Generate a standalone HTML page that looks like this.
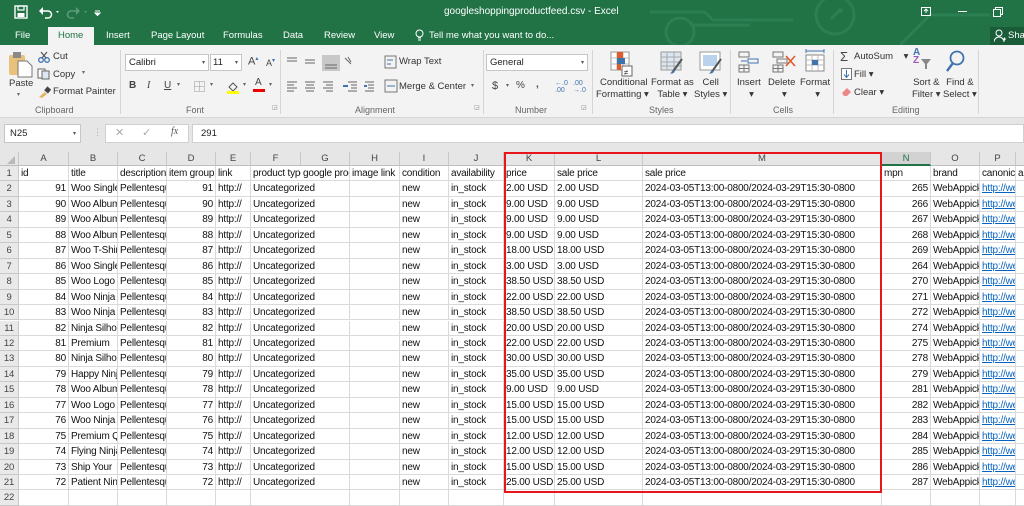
<!DOCTYPE html>
<html><head><meta charset="utf-8"><style>
*{margin:0;padding:0;box-sizing:border-box}
body{width:1024px;height:494px;overflow:hidden;position:relative;background:#fff;font-family:"Liberation Sans",Arial,sans-serif;color:#222}
.a{position:absolute;white-space:nowrap}
.tb{position:absolute;left:0;top:0;width:1024px;height:45px;background:#217346}
.rib{position:absolute;left:0;top:45px;width:1024px;height:73px;background:#f3f3f3;border-bottom:1px solid #d6d6d6}
.rt{font-size:9.5px;color:#333}
.gl{font-size:9px;color:#666;top:105px}
.sep{position:absolute;top:50px;width:1px;height:64px;background:#d5d5d5}
.r{position:absolute;left:0;width:1024px;height:15.45px}
.r i{font-style:normal;position:absolute;top:0;height:15.45px;line-height:15px;font-size:10px;letter-spacing:-0.2px;padding:0 2px;border-right:1px solid #dadada;border-bottom:1px solid #dadada;overflow:hidden;white-space:nowrap;color:#111}
.r i.rh{left:0;width:19px;background:#e9e9e9;border-color:#c8c8c8;text-align:center;color:#444;padding:0;font-size:9.5px}
.n{text-align:right}
.A{left:19px;width:50px}.B{left:69px;width:49px}.C{left:118px;width:49px}.D{left:167px;width:49px}.E{left:216px;width:35px}.F{left:251px;width:50px;overflow:visible!important;border-right:none!important;z-index:2}.G{left:301px;width:49px}.H{left:350px;width:50px}.I{left:400px;width:49px}.J{left:449px;width:55px}.K{left:504px;width:51px}.L{left:555px;width:88px}.M{left:643px;width:239px}.N{left:882px;width:49px}.O{left:931px;width:49px}.P{left:980px;width:36px}.Q{left:1016px;width:40px}
.lk{color:#0563c1!important;text-decoration:underline}
.ch{position:absolute;top:152px;height:14px;background:#e6e6e6;border-right:1px solid #c8c8c8;border-bottom:1px solid #bdbdbd;font-size:9.5px;text-align:center;line-height:14px;color:#444}
</style></head><body>
<div class="tb"></div>
<!-- title bar -->
<svg class="a" style="left:14px;top:5px" width="14" height="14" viewBox="0 0 14 14"><rect x="1" y="1" width="12" height="12" fill="none" stroke="#fff" stroke-width="1.4"/><rect x="4" y="1" width="6" height="4" fill="none" stroke="#fff" stroke-width="1.2"/><rect x="3.5" y="8" width="7" height="4" fill="#fff"/></svg>
<svg class="a" style="left:38px;top:5px" width="28" height="14" viewBox="0 0 28 14"><path d="M3 6h7a3.5 3.5 0 0 1 0 7H7" fill="none" stroke="#fff" stroke-width="1.5"/><path d="M1 6l4-4v8z" fill="#fff"/><path d="M18 6l3 0-1.5 2z" fill="#fff"/></svg>
<svg class="a" style="left:66px;top:5px" width="36" height="14" viewBox="0 0 36 14"><path d="M12 6H5a3.5 3.5 0 0 0 0 7h3" fill="none" stroke="#5c9b78" stroke-width="1.5"/><path d="M14 6l-4-4v8z" fill="#5c9b78"/><path d="M18 6h3l-1.5 2z" fill="#5c9b78"/><path d="M29 8h5l-2.5 2.5z M29 6h5" stroke="#fff" fill="#fff" stroke-width="1"/></svg>
<div class="a" style="left:444px;top:6px;font-size:10px;color:#fff">googleshoppingproductfeed.csv - Excel</div>
<svg class="a" style="left:650px;top:0" width="340" height="45" viewBox="0 0 340 45"><g fill="none" stroke="#2c7f52" stroke-width="3"><circle cx="185" cy="15" r="19"/><circle cx="30" cy="32" r="14"/><path d="M-5 12h60M55 12l8 8h80M40 25h60M190 10l-9 9M188 10h3v3M250 45l30-30h60"/></g></svg>
<svg class="a" style="left:921px;top:7px" width="10" height="9"><rect x="0.5" y="0.5" width="9" height="8" fill="none" stroke="#fff"/><path d="M5 2v4M3 4l2-2 2 2" stroke="#fff" fill="none"/></svg>
<div class="a" style="left:958px;top:11px;width:9px;height:1px;background:#fff"></div>
<svg class="a" style="left:993px;top:7px" width="10" height="10"><rect x="0.5" y="2.5" width="7" height="7" fill="none" stroke="#fff"/><path d="M2.5 2.5V0.5h7v7h-2" fill="none" stroke="#fff"/></svg>
<!-- tabs -->
<div class="a" style="left:48px;top:27px;width:46px;height:19px;background:#f3f3f3"></div>
<div class="a" style="left:15px;top:30px;font-size:9.5px;color:#fff">File</div>
<div class="a" style="left:58px;top:30px;font-size:9.5px;color:#217346">Home</div>
<div class="a" style="left:106px;top:30px;font-size:9.5px;color:#fff">Insert</div>
<div class="a" style="left:151px;top:30px;font-size:9.5px;color:#fff">Page Layout</div>
<div class="a" style="left:223px;top:30px;font-size:9.5px;color:#fff">Formulas</div>
<div class="a" style="left:283px;top:30px;font-size:9.5px;color:#fff">Data</div>
<div class="a" style="left:324px;top:30px;font-size:9.5px;color:#fff">Review</div>
<div class="a" style="left:374px;top:30px;font-size:9.5px;color:#fff">View</div>
<svg class="a" style="left:415px;top:29px" width="9" height="13"><circle cx="4.5" cy="4.5" r="3.5" fill="none" stroke="#fff"/><path d="M3 9h3M3 11h3" stroke="#fff"/></svg>
<div class="a" style="left:429px;top:30px;font-size:9.5px;color:#fff">Tell me what you want to do...</div>
<div class="a" style="left:990px;top:27px;width:34px;height:18px;background:#1a5c38"></div>
<svg class="a" style="left:994px;top:29px" width="12" height="14"><circle cx="5" cy="4" r="3" fill="none" stroke="#fff"/><path d="M0 13a5 5 0 0 1 10 0M9 10h3M10.5 8.5v3" stroke="#fff" fill="none"/></svg>
<div class="a" style="left:1008px;top:30px;font-size:9.5px;color:#fff">Sha</div>
<!-- ribbon -->
<div class="rib"></div>
<svg class="a" style="left:8px;top:51px" width="26" height="27"><rect x="1" y="4" width="16" height="20" rx="2" fill="#e8c27a"/><rect x="5" y="1" width="8" height="6" fill="#8a8a8a"/><path d="M10 10h9l5 5v11H10z" fill="#fff" stroke="#777"/></svg>
<div class="a rt" style="left:9px;top:78px">Paste</div>
<div class="a" style="left:17px;top:91px;font-size:6px;color:#666">▾</div>
<svg class="a" style="left:38px;top:51px" width="12" height="12"><circle cx="3" cy="9" r="2.3" fill="none" stroke="#3f73ae" stroke-width="1.3"/><circle cx="9" cy="9" r="2.3" fill="none" stroke="#3f73ae" stroke-width="1.3"/><path d="M3 1l5 6M9 1L4 7" stroke="#555" stroke-width="1.2"/></svg>
<div class="a rt" style="left:53px;top:51px">Cut</div>
<svg class="a" style="left:37px;top:68px" width="13" height="12"><rect x="1" y="1" width="7" height="9" fill="#fff" stroke="#666"/><rect x="5" y="3" width="7" height="8" fill="#dde8f4" stroke="#666"/></svg>
<div class="a rt" style="left:53px;top:69px">Copy</div><div class="a" style="left:82px;top:69px;font-size:6px;color:#666">▾</div>
<svg class="a" style="left:38px;top:86px" width="13" height="12"><path d="M1 11l6-5 2 2-5 4z" fill="#e2b361"/><rect x="7" y="1" width="5" height="5" fill="#444" transform="rotate(40 9 4)"/></svg>
<div class="a rt" style="left:53px;top:86px">Format Painter</div>
<div class="a gl" style="left:35px">Clipboard</div>
<div class="sep" style="left:120px"></div>
<div class="a" style="left:125px;top:54px;width:84px;height:17px;background:#fff;border:1px solid #c6c6c6;font-size:9.5px;padding:2px 3px">Calibri<span style="position:absolute;right:3px;font-size:6px;top:4px;color:#555">▾</span></div>
<div class="a" style="left:210px;top:54px;width:32px;height:17px;background:#fff;border:1px solid #c6c6c6;font-size:9.5px;padding:2px 2px">11<span style="position:absolute;right:3px;font-size:6px;top:4px;color:#555">▾</span></div>
<div class="a" style="left:248px;top:55px;font-size:11px;color:#444">A<sup style="font-size:6px;color:#3f73ae">▴</sup></div>
<div class="a" style="left:266px;top:57px;font-size:9px;color:#444">A<sup style="font-size:6px;color:#3f73ae">▾</sup></div>
<div class="a" style="left:129px;top:80px;font-size:10px;font-weight:bold;color:#444">B</div>
<div class="a" style="left:147px;top:80px;font-size:10px;font-style:italic;font-family:'Liberation Serif',serif;color:#444">I</div>
<div class="a" style="left:164px;top:80px;font-size:10px;text-decoration:underline;color:#444">U</div>
<div class="a" style="left:177px;top:81px;font-size:6px;color:#666">▾</div>
<svg class="a" style="left:194px;top:81px" width="11" height="11"><path d="M.5.5h10v10H.5zM5.5.5v10M.5 5.5h10" fill="none" stroke="#999" stroke-dasharray="1 1"/></svg>
<div class="a" style="left:210px;top:81px;font-size:6px;color:#666">▾</div>
<svg class="a" style="left:226px;top:80px" width="14" height="14"><path d="M3 7l4-4 4 4-4 4z" fill="none" stroke="#555"/><rect x="1" y="11" width="12" height="3" fill="#ffff00"/></svg>
<div class="a" style="left:243px;top:81px;font-size:6px;color:#666">▾</div>
<div class="a" style="left:255px;top:77px;font-size:10px;color:#444">A</div><div class="a" style="left:253px;top:89px;width:12px;height:3px;background:#e00"></div>
<div class="a" style="left:269px;top:81px;font-size:6px;color:#666">▾</div>
<div class="a gl" style="left:186px">Font</div>
<div class="a" style="left:272px;top:104px;font-size:6px;color:#888">◲</div>
<div class="sep" style="left:280px"></div>
<svg class="a" style="left:285px;top:55px" width="70" height="16"><g stroke="#666"><path d="M2 3h10M2 6h10M20 5h10M20 8h10"/></g><rect x="37" y="0" width="18" height="16" fill="#c8c8c8"/><path d="M40 10h12M40 13h12" stroke="#666"/><path d="M60 3l6 6M63 2l3 5" stroke="#666"/></svg>
<svg class="a" style="left:285px;top:80px" width="95" height="14"><g stroke="#666"><path d="M2 2h10M2 5h7M2 8h10M2 11h7M20 2h10M21 5h8M20 8h10M21 11h8M38 2h10M41 5h7M38 8h10M41 11h7"/><path d="M63 2h9M66 5h6M66 8h6M63 11h9M80 2h9M83 5h6M83 8h6M80 11h9"/></g><path d="M58 6h5M82 6h-3" stroke="#3f73ae" stroke-width="2"/></svg>
<svg class="a" style="left:384px;top:55px" width="14" height="14"><rect x="1" y="1" width="11" height="12" fill="none" stroke="#777"/><path d="M3 5h6M3 9h4" stroke="#3f73ae"/></svg>
<div class="a rt" style="left:399px;top:56px">Wrap Text</div>
<svg class="a" style="left:384px;top:79px" width="14" height="14"><rect x="1" y="1" width="12" height="12" fill="none" stroke="#777"/><path d="M3 7h8" stroke="#3f73ae"/></svg>
<div class="a rt" style="left:399px;top:81px">Merge &amp; Center</div><div class="a" style="left:471px;top:82px;font-size:6px;color:#666">▾</div>
<div class="a gl" style="left:355px">Alignment</div>
<div class="a" style="left:474px;top:104px;font-size:6px;color:#888">◲</div>
<div class="sep" style="left:483px"></div>
<div class="a" style="left:486px;top:54px;width:102px;height:17px;background:#fff;border:1px solid #c6c6c6;font-size:9.5px;padding:2px 3px">General<span style="position:absolute;right:3px;font-size:6px;top:4px;color:#555">▾</span></div>
<div class="a" style="left:492px;top:80px;font-size:11px;color:#444">$</div><div class="a" style="left:506px;top:82px;font-size:6px;color:#666">▾</div>
<div class="a" style="left:516px;top:80px;font-size:10px;color:#444">%</div>
<div class="a" style="left:536px;top:79px;font-size:10px;color:#444;font-weight:bold">,</div>
<div class="a" style="left:555px;top:80px;font-size:7px;color:#3f73ae;line-height:7px">←.0<br>.00</div>
<div class="a" style="left:573px;top:80px;font-size:7px;color:#3f73ae;line-height:7px">.00<br>→.0</div>
<div class="a gl" style="left:515px">Number</div>
<div class="a" style="left:581px;top:104px;font-size:6px;color:#888">◲</div>
<div class="sep" style="left:592px"></div>
<svg class="a" style="left:610px;top:51px" width="24" height="26"><rect x="1" y="1" width="18" height="18" fill="#fff" stroke="#999"/><path d="M1 7h18M1 13h18M7 1v18M13 1v18" stroke="#bbb"/><rect x="7" y="1" width="6" height="6" fill="#e05a2b"/><rect x="7" y="7" width="8" height="6" fill="#3f73ae"/><rect x="7" y="13" width="4" height="6" fill="#e05a2b"/><rect x="12" y="15" width="10" height="10" fill="#fff" stroke="#666"/><text x="14" y="24" font-size="8" fill="#333">≠</text></svg>
<svg class="a" style="left:660px;top:51px" width="26" height="24"><rect x="1" y="1" width="20" height="18" fill="#dce6f0" stroke="#999"/><path d="M1 6h20M1 11h20M1 15h20M7 1v18M14 1v18" stroke="#aaa"/><path d="M12 22l10-14" stroke="#555" stroke-width="2"/><path d="M10 23l3-4 2 2z" fill="#3f73ae"/></svg>
<svg class="a" style="left:699px;top:51px" width="26" height="24"><rect x="1" y="1" width="20" height="18" fill="#fff" stroke="#999"/><rect x="4" y="4" width="14" height="11" fill="#b9d3ec"/><path d="M12 22l10-14" stroke="#555" stroke-width="2"/><path d="M10 23l3-4 2 2z" fill="#3f73ae"/></svg>
<div class="a rt" style="left:596px;top:77px;text-align:center;line-height:12px">&nbsp;Conditional<br>Formatting ▾</div>
<div class="a rt" style="left:651px;top:77px;text-align:center;line-height:12px">Format as<br>Table ▾</div>
<div class="a rt" style="left:694px;top:77px;text-align:center;line-height:12px">Cell<br>Styles ▾</div>
<div class="a gl" style="left:649px">Styles</div>
<div class="sep" style="left:730px"></div>
<svg class="a" style="left:738px;top:51px" width="22" height="22"><path d="M1 1h10v5H1zM1 14h10v7H1zM1 17.5h10M6 14v7" fill="none" stroke="#777"/><rect x="10" y="8" width="10" height="4" fill="none" stroke="#3f73ae"/><path d="M3 10h6" stroke="#3f73ae"/></svg>
<svg class="a" style="left:772px;top:51px" width="24" height="22"><path d="M1 1h10v5H1zM1 14h10v7H1zM1 17.5h10M6 14v7M5 8h10v4H5z" fill="none" stroke="#777"/><path d="M14 5l9 10M23 5l-9 10" stroke="#e05a2b" stroke-width="1.6"/></svg>
<svg class="a" style="left:804px;top:49px" width="22" height="25"><path d="M2 2h18M2 0v4M20 0v4" stroke="#3f73ae"/><rect x="2" y="6" width="18" height="16" fill="#fff" stroke="#888"/><path d="M2 11h18M2 16h18M8 6v16M14 6v16" stroke="#bbb"/><rect x="8" y="11" width="6" height="5" fill="#3f73ae"/></svg>
<div class="a rt" style="left:737px;top:77px;text-align:center;line-height:12px">Insert<br>&nbsp;&nbsp;▾</div>
<div class="a rt" style="left:768px;top:77px;text-align:center;line-height:12px">Delete<br>&nbsp;&nbsp;▾</div>
<div class="a rt" style="left:800px;top:77px;text-align:center;line-height:12px">Format<br>&nbsp;&nbsp;▾</div>
<div class="a gl" style="left:773px">Cells</div>
<div class="sep" style="left:833px"></div>
<div class="a" style="left:840px;top:49px;font-size:13px;color:#444">Σ</div>
<div class="a rt" style="left:854px;top:51px">AutoSum&nbsp;&nbsp;&nbsp;&nbsp;▾</div>
<svg class="a" style="left:841px;top:68px" width="11" height="12"><rect x="0.5" y="0.5" width="10" height="11" fill="#fff" stroke="#777"/><path d="M5.5 2v7M3 6.5l2.5 3 2.5-3" stroke="#3f73ae" fill="none"/></svg>
<div class="a rt" style="left:854px;top:69px">Fill ▾</div>
<svg class="a" style="left:841px;top:86px" width="12" height="10"><path d="M1 7l5-5 4 4-4 4H3z" fill="#e88"/></svg>
<div class="a rt" style="left:854px;top:87px">Clear ▾</div>
<div class="a" style="left:913px;top:49px;font-size:10px;color:#3f73ae;line-height:8px;font-weight:bold">A<br><span style="color:#9b59b6">Z</span></div>
<svg class="a" style="left:920px;top:58px" width="12" height="12"><path d="M1 1h10L7 6v5H5V6z" fill="#888"/></svg>
<svg class="a" style="left:945px;top:50px" width="20" height="24"><circle cx="12" cy="8" r="6.5" fill="none" stroke="#3f73ae" stroke-width="1.8"/><path d="M8 13l-6 8" stroke="#3f73ae" stroke-width="2.4"/></svg>
<div class="a rt" style="left:912px;top:77px;text-align:center;line-height:12px">Sort &amp;<br>Filter ▾</div>
<div class="a rt" style="left:943px;top:77px;text-align:center;line-height:12px">Find &amp;<br>Select ▾</div>
<div class="a gl" style="left:892px">Editing</div>
<div class="sep" style="left:978px"></div>
<div class="a" style="left:0;top:118px;width:1024px;height:34px;background:#e6e6e6"></div>
<!-- formula bar -->
<div class="a" style="left:4px;top:124px;width:77px;height:19px;background:#fff;border:1px solid #c6c6c6;font-size:9.5px;padding:3px 5px">N25<span style="position:absolute;right:4px;top:5px;font-size:6px;color:#555">▾</span></div>
<div class="a" style="left:93px;top:127px;font-size:9px;color:#aaa">⋮</div>
<div class="a" style="left:105px;top:124px;width:84px;height:19px;background:#fff;border:1px solid #d0d0d0"></div>
<div class="a" style="left:115px;top:126px;font-size:11px;color:#aaa">✕</div>
<div class="a" style="left:142px;top:126px;font-size:11px;color:#aaa">✓</div>
<div class="a" style="left:171px;top:126px;font-size:10px;color:#555;font-style:italic;font-family:'Liberation Serif',serif">fx</div>
<div class="a" style="left:192px;top:124px;width:832px;height:19px;background:#fff;border:1px solid #d0d0d0;font-size:9.5px;padding:3px 8px">291</div>
<!-- column headers -->
<div class="ch" style="left:0;width:19px"><svg width="10" height="10" style="position:absolute;left:6px;top:3px"><path d="M9 1v8H1z" fill="#b9b9b9"/></svg></div>
<div class="ch A">A</div><div class="ch B">B</div><div class="ch C">C</div><div class="ch D">D</div><div class="ch E">E</div><div class="ch" style="left:251px;width:50px">F</div><div class="ch G">G</div><div class="ch H">H</div><div class="ch I">I</div><div class="ch J">J</div><div class="ch K">K</div><div class="ch L">L</div><div class="ch M">M</div><div class="ch N" style="background:#d2d2d2;color:#217346;border-bottom:2px solid #217346">N</div><div class="ch O">O</div><div class="ch P">P</div><div class="ch Q"></div>
<!-- rows -->
<div class="r" style="top:166px"><i class="rh">1</i><i class="A">id</i><i class="B">title</i><i class="C">description</i><i class="D">item group</i><i class="E">link</i><i class="F" style="width:50px;overflow:hidden!important">product type</i><i class="G">google product</i><i class="H">image link</i><i class="I">condition</i><i class="J">availability</i><i class="K">price</i><i class="L">sale price</i><i class="M">sale price</i><i class="N">mpn</i><i class="O">brand</i><i class="P">canonical</i><i class="Q">a</i></div>
<div class="r" style="top:181.45px"><i class="rh">2</i><i class="A n">91</i><i class="B">Woo Single</i><i class="C">Pellentesque</i><i class="D n">91</i><i class="E">http://</i><i class="F">Uncategorized</i><i class="G"></i><i class="H"></i><i class="I">new</i><i class="J">in_stock</i><i class="K">2.00 USD</i><i class="L">2.00 USD</i><i class="M">2024-03-05T13:00-0800/2024-03-29T15:30-0800</i><i class="N n">265</i><i class="O">WebAppick</i><i class="P lk">http://we</i><i class="Q"></i></div>
<div class="r" style="top:196.9px"><i class="rh">3</i><i class="A n">90</i><i class="B">Woo Album</i><i class="C">Pellentesque</i><i class="D n">90</i><i class="E">http://</i><i class="F">Uncategorized</i><i class="G"></i><i class="H"></i><i class="I">new</i><i class="J">in_stock</i><i class="K">9.00 USD</i><i class="L">9.00 USD</i><i class="M">2024-03-05T13:00-0800/2024-03-29T15:30-0800</i><i class="N n">266</i><i class="O">WebAppick</i><i class="P lk">http://we</i><i class="Q"></i></div>
<div class="r" style="top:212.35px"><i class="rh">4</i><i class="A n">89</i><i class="B">Woo Album</i><i class="C">Pellentesque</i><i class="D n">89</i><i class="E">http://</i><i class="F">Uncategorized</i><i class="G"></i><i class="H"></i><i class="I">new</i><i class="J">in_stock</i><i class="K">9.00 USD</i><i class="L">9.00 USD</i><i class="M">2024-03-05T13:00-0800/2024-03-29T15:30-0800</i><i class="N n">267</i><i class="O">WebAppick</i><i class="P lk">http://we</i><i class="Q"></i></div>
<div class="r" style="top:227.8px"><i class="rh">5</i><i class="A n">88</i><i class="B">Woo Album</i><i class="C">Pellentesque</i><i class="D n">88</i><i class="E">http://</i><i class="F">Uncategorized</i><i class="G"></i><i class="H"></i><i class="I">new</i><i class="J">in_stock</i><i class="K">9.00 USD</i><i class="L">9.00 USD</i><i class="M">2024-03-05T13:00-0800/2024-03-29T15:30-0800</i><i class="N n">268</i><i class="O">WebAppick</i><i class="P lk">http://we</i><i class="Q"></i></div>
<div class="r" style="top:243.25px"><i class="rh">6</i><i class="A n">87</i><i class="B">Woo T-Shirt</i><i class="C">Pellentesque</i><i class="D n">87</i><i class="E">http://</i><i class="F">Uncategorized</i><i class="G"></i><i class="H"></i><i class="I">new</i><i class="J">in_stock</i><i class="K">18.00 USD</i><i class="L">18.00 USD</i><i class="M">2024-03-05T13:00-0800/2024-03-29T15:30-0800</i><i class="N n">269</i><i class="O">WebAppick</i><i class="P lk">http://we</i><i class="Q"></i></div>
<div class="r" style="top:258.7px"><i class="rh">7</i><i class="A n">86</i><i class="B">Woo Single</i><i class="C">Pellentesque</i><i class="D n">86</i><i class="E">http://</i><i class="F">Uncategorized</i><i class="G"></i><i class="H"></i><i class="I">new</i><i class="J">in_stock</i><i class="K">3.00 USD</i><i class="L">3.00 USD</i><i class="M">2024-03-05T13:00-0800/2024-03-29T15:30-0800</i><i class="N n">264</i><i class="O">WebAppick</i><i class="P lk">http://we</i><i class="Q"></i></div>
<div class="r" style="top:274.15px"><i class="rh">8</i><i class="A n">85</i><i class="B">Woo Logo</i><i class="C">Pellentesque</i><i class="D n">85</i><i class="E">http://</i><i class="F">Uncategorized</i><i class="G"></i><i class="H"></i><i class="I">new</i><i class="J">in_stock</i><i class="K">38.50 USD</i><i class="L">38.50 USD</i><i class="M">2024-03-05T13:00-0800/2024-03-29T15:30-0800</i><i class="N n">270</i><i class="O">WebAppick</i><i class="P lk">http://we</i><i class="Q"></i></div>
<div class="r" style="top:289.6px"><i class="rh">9</i><i class="A n">84</i><i class="B">Woo Ninja</i><i class="C">Pellentesque</i><i class="D n">84</i><i class="E">http://</i><i class="F">Uncategorized</i><i class="G"></i><i class="H"></i><i class="I">new</i><i class="J">in_stock</i><i class="K">22.00 USD</i><i class="L">22.00 USD</i><i class="M">2024-03-05T13:00-0800/2024-03-29T15:30-0800</i><i class="N n">271</i><i class="O">WebAppick</i><i class="P lk">http://we</i><i class="Q"></i></div>
<div class="r" style="top:305.05px"><i class="rh">10</i><i class="A n">83</i><i class="B">Woo Ninja</i><i class="C">Pellentesque</i><i class="D n">83</i><i class="E">http://</i><i class="F">Uncategorized</i><i class="G"></i><i class="H"></i><i class="I">new</i><i class="J">in_stock</i><i class="K">38.50 USD</i><i class="L">38.50 USD</i><i class="M">2024-03-05T13:00-0800/2024-03-29T15:30-0800</i><i class="N n">272</i><i class="O">WebAppick</i><i class="P lk">http://we</i><i class="Q"></i></div>
<div class="r" style="top:320.5px"><i class="rh">11</i><i class="A n">82</i><i class="B">Ninja Silhouette</i><i class="C">Pellentesque</i><i class="D n">82</i><i class="E">http://</i><i class="F">Uncategorized</i><i class="G"></i><i class="H"></i><i class="I">new</i><i class="J">in_stock</i><i class="K">20.00 USD</i><i class="L">20.00 USD</i><i class="M">2024-03-05T13:00-0800/2024-03-29T15:30-0800</i><i class="N n">274</i><i class="O">WebAppick</i><i class="P lk">http://we</i><i class="Q"></i></div>
<div class="r" style="top:335.95px"><i class="rh">12</i><i class="A n">81</i><i class="B">Premium</i><i class="C">Pellentesque</i><i class="D n">81</i><i class="E">http://</i><i class="F">Uncategorized</i><i class="G"></i><i class="H"></i><i class="I">new</i><i class="J">in_stock</i><i class="K">22.00 USD</i><i class="L">22.00 USD</i><i class="M">2024-03-05T13:00-0800/2024-03-29T15:30-0800</i><i class="N n">275</i><i class="O">WebAppick</i><i class="P lk">http://we</i><i class="Q"></i></div>
<div class="r" style="top:351.4px"><i class="rh">13</i><i class="A n">80</i><i class="B">Ninja Silhouette</i><i class="C">Pellentesque</i><i class="D n">80</i><i class="E">http://</i><i class="F">Uncategorized</i><i class="G"></i><i class="H"></i><i class="I">new</i><i class="J">in_stock</i><i class="K">30.00 USD</i><i class="L">30.00 USD</i><i class="M">2024-03-05T13:00-0800/2024-03-29T15:30-0800</i><i class="N n">278</i><i class="O">WebAppick</i><i class="P lk">http://we</i><i class="Q"></i></div>
<div class="r" style="top:366.85px"><i class="rh">14</i><i class="A n">79</i><i class="B">Happy Ninja</i><i class="C">Pellentesque</i><i class="D n">79</i><i class="E">http://</i><i class="F">Uncategorized</i><i class="G"></i><i class="H"></i><i class="I">new</i><i class="J">in_stock</i><i class="K">35.00 USD</i><i class="L">35.00 USD</i><i class="M">2024-03-05T13:00-0800/2024-03-29T15:30-0800</i><i class="N n">279</i><i class="O">WebAppick</i><i class="P lk">http://we</i><i class="Q"></i></div>
<div class="r" style="top:382.3px"><i class="rh">15</i><i class="A n">78</i><i class="B">Woo Album</i><i class="C">Pellentesque</i><i class="D n">78</i><i class="E">http://</i><i class="F">Uncategorized</i><i class="G"></i><i class="H"></i><i class="I">new</i><i class="J">in_stock</i><i class="K">9.00 USD</i><i class="L">9.00 USD</i><i class="M">2024-03-05T13:00-0800/2024-03-29T15:30-0800</i><i class="N n">281</i><i class="O">WebAppick</i><i class="P lk">http://we</i><i class="Q"></i></div>
<div class="r" style="top:397.75px"><i class="rh">16</i><i class="A n">77</i><i class="B">Woo Logo</i><i class="C">Pellentesque</i><i class="D n">77</i><i class="E">http://</i><i class="F">Uncategorized</i><i class="G"></i><i class="H"></i><i class="I">new</i><i class="J">in_stock</i><i class="K">15.00 USD</i><i class="L">15.00 USD</i><i class="M">2024-03-05T13:00-0800/2024-03-29T15:30-0800</i><i class="N n">282</i><i class="O">WebAppick</i><i class="P lk">http://we</i><i class="Q"></i></div>
<div class="r" style="top:413.2px"><i class="rh">17</i><i class="A n">76</i><i class="B">Woo Ninja</i><i class="C">Pellentesque</i><i class="D n">76</i><i class="E">http://</i><i class="F">Uncategorized</i><i class="G"></i><i class="H"></i><i class="I">new</i><i class="J">in_stock</i><i class="K">15.00 USD</i><i class="L">15.00 USD</i><i class="M">2024-03-05T13:00-0800/2024-03-29T15:30-0800</i><i class="N n">283</i><i class="O">WebAppick</i><i class="P lk">http://we</i><i class="Q"></i></div>
<div class="r" style="top:428.65px"><i class="rh">18</i><i class="A n">75</i><i class="B">Premium Q</i><i class="C">Pellentesque</i><i class="D n">75</i><i class="E">http://</i><i class="F">Uncategorized</i><i class="G"></i><i class="H"></i><i class="I">new</i><i class="J">in_stock</i><i class="K">12.00 USD</i><i class="L">12.00 USD</i><i class="M">2024-03-05T13:00-0800/2024-03-29T15:30-0800</i><i class="N n">284</i><i class="O">WebAppick</i><i class="P lk">http://we</i><i class="Q"></i></div>
<div class="r" style="top:444.1px"><i class="rh">19</i><i class="A n">74</i><i class="B">Flying Ninja</i><i class="C">Pellentesque</i><i class="D n">74</i><i class="E">http://</i><i class="F">Uncategorized</i><i class="G"></i><i class="H"></i><i class="I">new</i><i class="J">in_stock</i><i class="K">12.00 USD</i><i class="L">12.00 USD</i><i class="M">2024-03-05T13:00-0800/2024-03-29T15:30-0800</i><i class="N n">285</i><i class="O">WebAppick</i><i class="P lk">http://we</i><i class="Q"></i></div>
<div class="r" style="top:459.55px"><i class="rh">20</i><i class="A n">73</i><i class="B">Ship Your</i><i class="C">Pellentesque</i><i class="D n">73</i><i class="E">http://</i><i class="F">Uncategorized</i><i class="G"></i><i class="H"></i><i class="I">new</i><i class="J">in_stock</i><i class="K">15.00 USD</i><i class="L">15.00 USD</i><i class="M">2024-03-05T13:00-0800/2024-03-29T15:30-0800</i><i class="N n">286</i><i class="O">WebAppick</i><i class="P lk">http://we</i><i class="Q"></i></div>
<div class="r" style="top:475px"><i class="rh">21</i><i class="A n">72</i><i class="B">Patient Ninja</i><i class="C">Pellentesque</i><i class="D n">72</i><i class="E">http://</i><i class="F">Uncategorized</i><i class="G"></i><i class="H"></i><i class="I">new</i><i class="J">in_stock</i><i class="K">25.00 USD</i><i class="L">25.00 USD</i><i class="M">2024-03-05T13:00-0800/2024-03-29T15:30-0800</i><i class="N n">287</i><i class="O">WebAppick</i><i class="P lk">http://we</i><i class="Q"></i></div>
<div class="r" style="top:490.45px"><i class="rh">22</i><i class="A"></i><i class="B"></i><i class="C"></i><i class="D"></i><i class="E"></i><i class="F"></i><i class="G"></i><i class="H"></i><i class="I"></i><i class="J"></i><i class="K"></i><i class="L"></i><i class="M"></i><i class="N"></i><i class="O"></i><i class="P"></i><i class="Q"></i></div>
<!-- red highlight -->
<div class="a" style="left:504px;top:152px;width:378px;height:341px;border:2px solid #e8151b;z-index:5"></div>
</body></html>
